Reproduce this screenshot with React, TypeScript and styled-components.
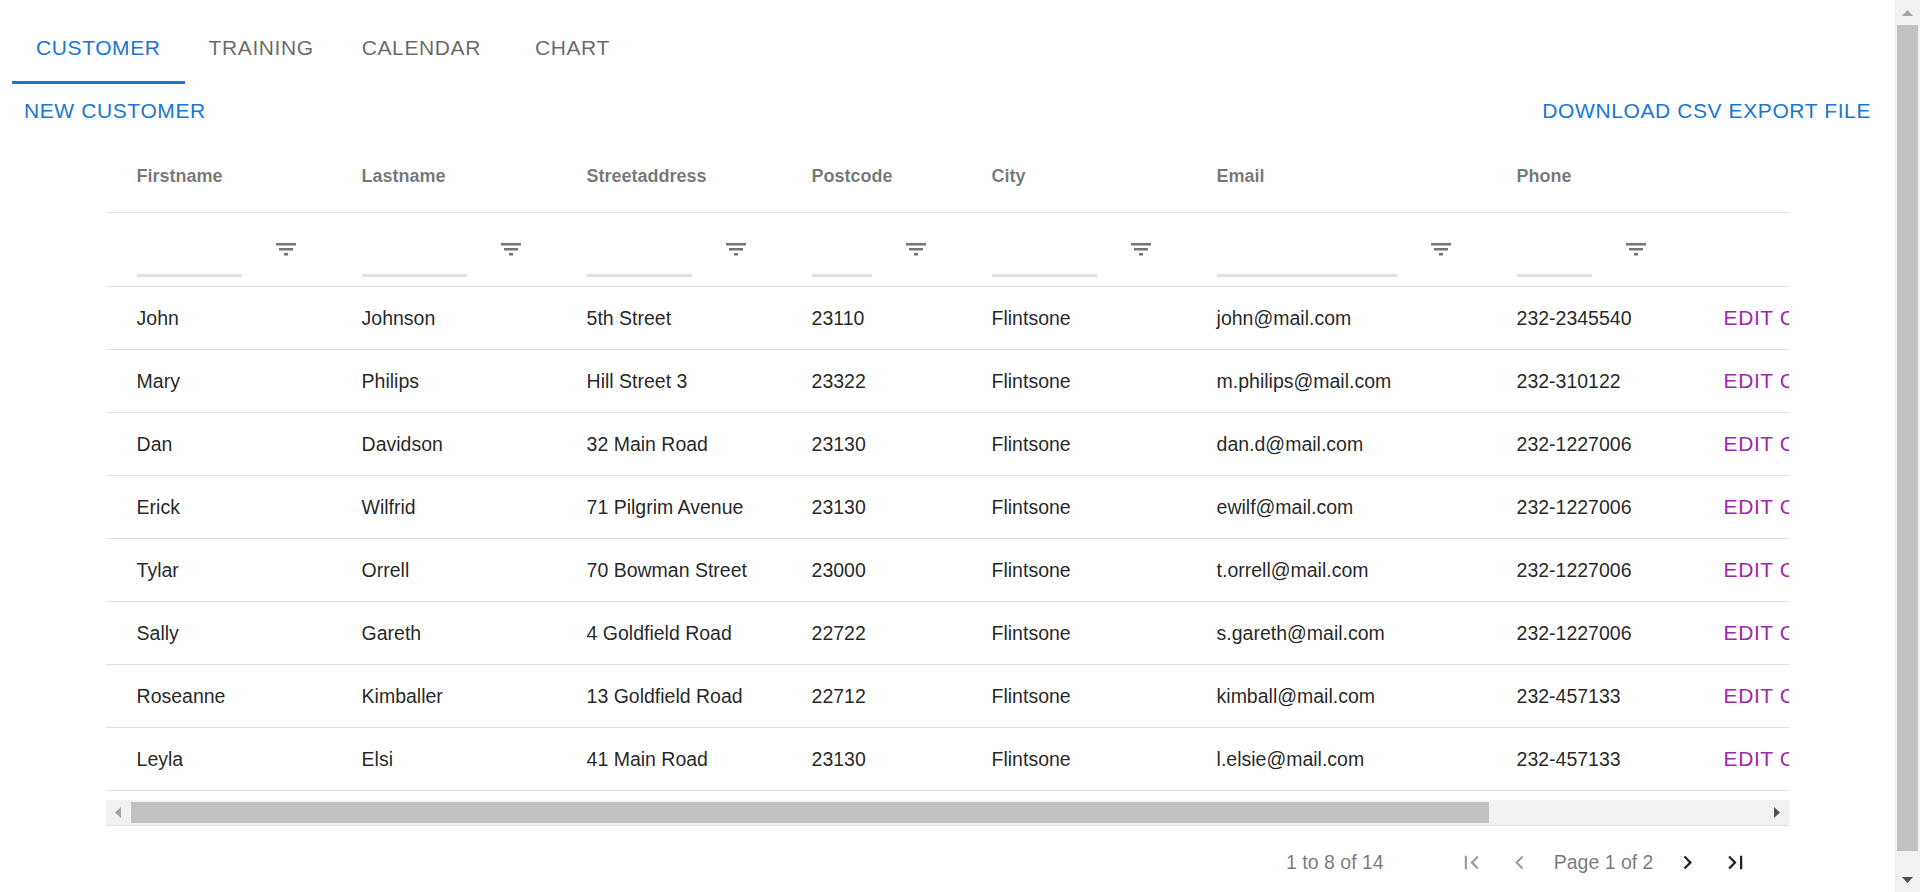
import React from "react";
import styled, { createGlobalStyle } from "styled-components";

const GlobalStyle = createGlobalStyle`
  * { box-sizing: border-box; }
  html, body { background: #ffffff; }
  body {
    margin: 0;
    font-family: "Liberation Sans", Arial, Helvetica, sans-serif;
    color: rgba(0, 0, 0, 0.87);
  }
`;

const COLUMNS = "225px 225px 225px 180px 225px 300px 195px 300px 151px";
const CONTENT_WIDTH = 2026;

const Shell = styled.div`
  display: flex;
  height: 100vh;
  overflow: hidden;
`;

const Main = styled.main`
  flex: 1;
  min-width: 0;
  padding: 12px;
`;

const VScrollbar = styled.div`
  display: flex;
  flex-direction: column;
  width: 25px;
  flex-shrink: 0;
  background: #f1f1f1;
`;

const VTrack = styled.div`
  flex: 1;
  display: flex;
  flex-direction: column;
`;

const VThumb = styled.div`
  margin: 0 2px;
  background: #c1c1c1;
`;

const ScrollArrow = styled.div`
  display: flex;
  align-items: center;
  justify-content: center;
  width: 25px;
  height: 25px;
  flex-shrink: 0;
  background: #f1f1f1;
`;

const TabBar = styled.nav`
  display: flex;
  height: 72px;
`;

const Tab = styled.button<{ $active?: boolean }>`
  display: flex;
  align-items: center;
  justify-content: center;
  min-width: 135px;
  height: 72px;
  padding: 0 24px;
  border: none;
  background: none;
  font-family: inherit;
  font-size: 21px;
  line-height: 1.25;
  letter-spacing: 0.6px;
  text-transform: uppercase;
  color: ${(p) => (p.$active ? "#1976d2" : "rgba(0, 0, 0, 0.6)")};
  box-shadow: ${(p) => (p.$active ? "inset 0 -3px 0 #1976d2" : "none")};
  cursor: pointer;
`;

const Toolbar = styled.div`
  display: flex;
  justify-content: space-between;
  align-items: center;
`;

const TextButton = styled.button<{ $tone?: "primary" | "secondary" }>`
  padding: 9px 12px;
  border: none;
  background: none;
  font-family: inherit;
  font-size: 21px;
  line-height: 1.75;
  letter-spacing: 0.6px;
  text-transform: uppercase;
  white-space: nowrap;
  color: ${(p) => (p.$tone === "secondary" ? "#9c27b0" : "#1976d2")};
  cursor: pointer;
`;

const GridWrap = styled.section`
  width: 90%;
  margin: 1.5px auto 0;
`;

const GridFrame = styled.div`
  border-bottom: 1px solid #e2e2e2;
`;

const GridViewport = styled.div`
  overflow: hidden;
`;

const GridInner = styled.div`
  width: ${CONTENT_WIDTH}px;
  padding-bottom: 9px;
`;

const HeaderRow = styled.div`
  display: grid;
  grid-template-columns: ${COLUMNS};
  height: 73px;
  border-bottom: 1px solid #e2e2e2;
`;

const HeaderCell = styled.div`
  display: flex;
  align-items: center;
  padding-left: 31px;
  font-size: 18px;
  font-weight: 700;
  color: rgba(0, 0, 0, 0.54);
`;

const FilterRow = styled.div`
  display: grid;
  grid-template-columns: ${COLUMNS};
  height: 74px;
  border-bottom: 1px solid #e2e2e2;
`;

const FilterCell = styled.div`
  display: flex;
  align-items: center;
  padding: 0 35px 0 31px;
`;

const FilterInput = styled.input`
  flex: 1;
  min-width: 0;
  height: 54px;
  padding: 0;
  border: none;
  border-bottom: 3px solid #e2e2e2;
  background: transparent;
  outline: none;
  font-family: inherit;
  font-size: 19.5px;
  color: rgba(0, 0, 0, 0.87);
`;

const FilterButton = styled.span`
  display: flex;
  margin-left: 34px;
  width: 20px;
  color: rgba(0, 0, 0, 0.54);
`;

const DataRow = styled.div`
  display: grid;
  grid-template-columns: ${COLUMNS};
  height: 63px;
  border-bottom: 1px solid #e2e2e2;
`;

const DataCell = styled.div`
  display: flex;
  align-items: center;
  padding: 1px 0 0 31px;
  font-size: 19.5px;
  white-space: nowrap;
  overflow: hidden;
  color: rgba(0, 0, 0, 0.87);
`;

const HScrollbar = styled.div`
  display: flex;
  height: 25px;
  background: #f1f1f1;
`;

const HTrack = styled.div`
  flex: 1;
  display: flex;
  padding-left: 0.5px;
`;

const HThumb = styled.div`
  margin: 2px 0;
  background: #c1c1c1;
`;

const PagingPanel = styled.div`
  display: flex;
  justify-content: flex-end;
  align-items: center;
  height: 72px;
  padding-right: 40px;
  font-size: 19.5px;
  color: rgba(0, 0, 0, 0.54);
`;

const Summary = styled.span`
  margin-right: 74px;
`;

const PageNav = styled.div`
  display: flex;
  align-items: center;
  gap: 21px;
`;

const PageButton = styled.span<{ $disabled?: boolean }>`
  display: flex;
  width: 27px;
  height: 27px;
  color: ${(p) => (p.$disabled ? "rgba(0, 0, 0, 0.38)" : "rgba(0, 0, 0, 0.87)")};
`;

const FilterIcon = () => (
  <svg width="20" height="13" viewBox="0 0 20 13" fill="currentColor">
    <rect x="0" y="0" width="20" height="2.5" />
    <rect x="3" y="5" width="14" height="2.5" />
    <rect x="8" y="10" width="4" height="2.5" />
  </svg>
);

const Icon = ({ d }: { d: string }) => (
  <svg width="27" height="27" viewBox="0 0 24 24" fill="currentColor">
    <path d={d} />
  </svg>
);

type Dir = "up" | "down" | "left" | "right";
const ARROWS: Record<Dir, { w: number; h: number; pts: string; color: string }> = {
  up: { w: 11, h: 6, pts: "5.5,0 11,6 0,6", color: "#a3a3a3" },
  down: { w: 11, h: 6, pts: "0,0 11,0 5.5,6", color: "#505050" },
  left: { w: 6, h: 11, pts: "6,0 6,11 0,5.5", color: "#a3a3a3" },
  right: { w: 6, h: 11, pts: "0,0 6,5.5 0,11", color: "#505050" },
};

const Arrow = ({ dir }: { dir: Dir }) => {
  const a = ARROWS[dir];
  return (
    <ScrollArrow>
      <svg width={a.w} height={a.h} viewBox={`0 0 ${a.w} ${a.h}`}>
        <polygon points={a.pts} fill={a.color} />
      </svg>
    </ScrollArrow>
  );
};

const ICONS = {
  first: "M18.41 16.59L13.82 12l4.59-4.59L17 6l-6 6 6 6zM6 6h2v12H6z",
  prev: "M15.41 7.41L14 6l-6 6 6 6 1.41-1.41L10.83 12z",
  next: "M10 6L8.59 7.41 13.17 12l-4.58 4.59L10 18l6-6z",
  last: "M5.59 7.41L10.18 12l-4.59 4.59L7 18l6-6-6-6zM16 6h2v12h-2z",
};

const headers = ["Firstname", "Lastname", "Streetaddress", "Postcode", "City", "Email", "Phone"];

const customers = [
  ["John", "Johnson", "5th Street", "23110", "Flintsone", "john@mail.com", "232-2345540"],
  ["Mary", "Philips", "Hill Street 3", "23322", "Flintsone", "m.philips@mail.com", "232-310122"],
  ["Dan", "Davidson", "32 Main Road", "23130", "Flintsone", "dan.d@mail.com", "232-1227006"],
  ["Erick", "Wilfrid", "71 Pilgrim Avenue", "23130", "Flintsone", "ewilf@mail.com", "232-1227006"],
  ["Tylar", "Orrell", "70 Bowman Street", "23000", "Flintsone", "t.orrell@mail.com", "232-1227006"],
  ["Sally", "Gareth", "4 Goldfield Road", "22722", "Flintsone", "s.gareth@mail.com", "232-1227006"],
  ["Roseanne", "Kimballer", "13 Goldfield Road", "22712", "Flintsone", "kimball@mail.com", "232-457133"],
  ["Leyla", "Elsi", "41 Main Road", "23130", "Flintsone", "l.elsie@mail.com", "232-457133"],
];

const tabs = ["Customer", "Training", "Calendar", "Chart"];

// visible part of the page / grid, used to size the drawn scrollbar thumbs
const PAGE_VIEW_RATIO = 892 / 909;
const GRID_VIEW_RATIO = 1684 / CONTENT_WIDTH;

export default function App() {
  return (
    <>
      <GlobalStyle />
      <Shell>
        <Main>
          <TabBar>
            {tabs.map((t, i) => (
              <Tab key={t} $active={i === 0}>
                {t}
              </Tab>
            ))}
          </TabBar>
          <Toolbar>
            <TextButton>New customer</TextButton>
            <TextButton>Download CSV export file</TextButton>
          </Toolbar>
          <GridWrap>
            <GridFrame>
              <GridViewport>
                <GridInner>
                  <HeaderRow>
                    {headers.map((h) => (
                      <HeaderCell key={h}>{h}</HeaderCell>
                    ))}
                    <HeaderCell />
                    <HeaderCell />
                  </HeaderRow>
                  <FilterRow>
                    {headers.map((h) => (
                      <FilterCell key={h}>
                        <FilterInput aria-label={`${h} filter`} />
                        <FilterButton>
                          <FilterIcon />
                        </FilterButton>
                      </FilterCell>
                    ))}
                    <FilterCell />
                    <FilterCell />
                  </FilterRow>
                  {customers.map((c, r) => (
                    <DataRow key={r}>
                      {c.map((v, i) => (
                        <DataCell key={i}>{v}</DataCell>
                      ))}
                      <DataCell>
                        <TextButton $tone="secondary">Edit customer</TextButton>
                      </DataCell>
                      <DataCell>
                        <TextButton $tone="secondary">Delete</TextButton>
                      </DataCell>
                    </DataRow>
                  ))}
                </GridInner>
              </GridViewport>
              <HScrollbar>
                <Arrow dir="left" />
                <HTrack>
                  <HThumb style={{ width: `${GRID_VIEW_RATIO * 100}%` }} />
                </HTrack>
                <Arrow dir="right" />
              </HScrollbar>
            </GridFrame>
            <PagingPanel>
              <Summary>1 to 8 of 14</Summary>
              <PageNav>
                <PageButton $disabled>
                  <Icon d={ICONS.first} />
                </PageButton>
                <PageButton $disabled>
                  <Icon d={ICONS.prev} />
                </PageButton>
                <span>Page 1 of 2</span>
                <PageButton>
                  <Icon d={ICONS.next} />
                </PageButton>
                <PageButton>
                  <Icon d={ICONS.last} />
                </PageButton>
              </PageNav>
            </PagingPanel>
          </GridWrap>
        </Main>
        <VScrollbar>
          <Arrow dir="up" />
          <VTrack>
            <VThumb style={{ height: `${PAGE_VIEW_RATIO * 100}%` }} />
          </VTrack>
          <Arrow dir="down" />
        </VScrollbar>
      </Shell>
    </>
  );
}
